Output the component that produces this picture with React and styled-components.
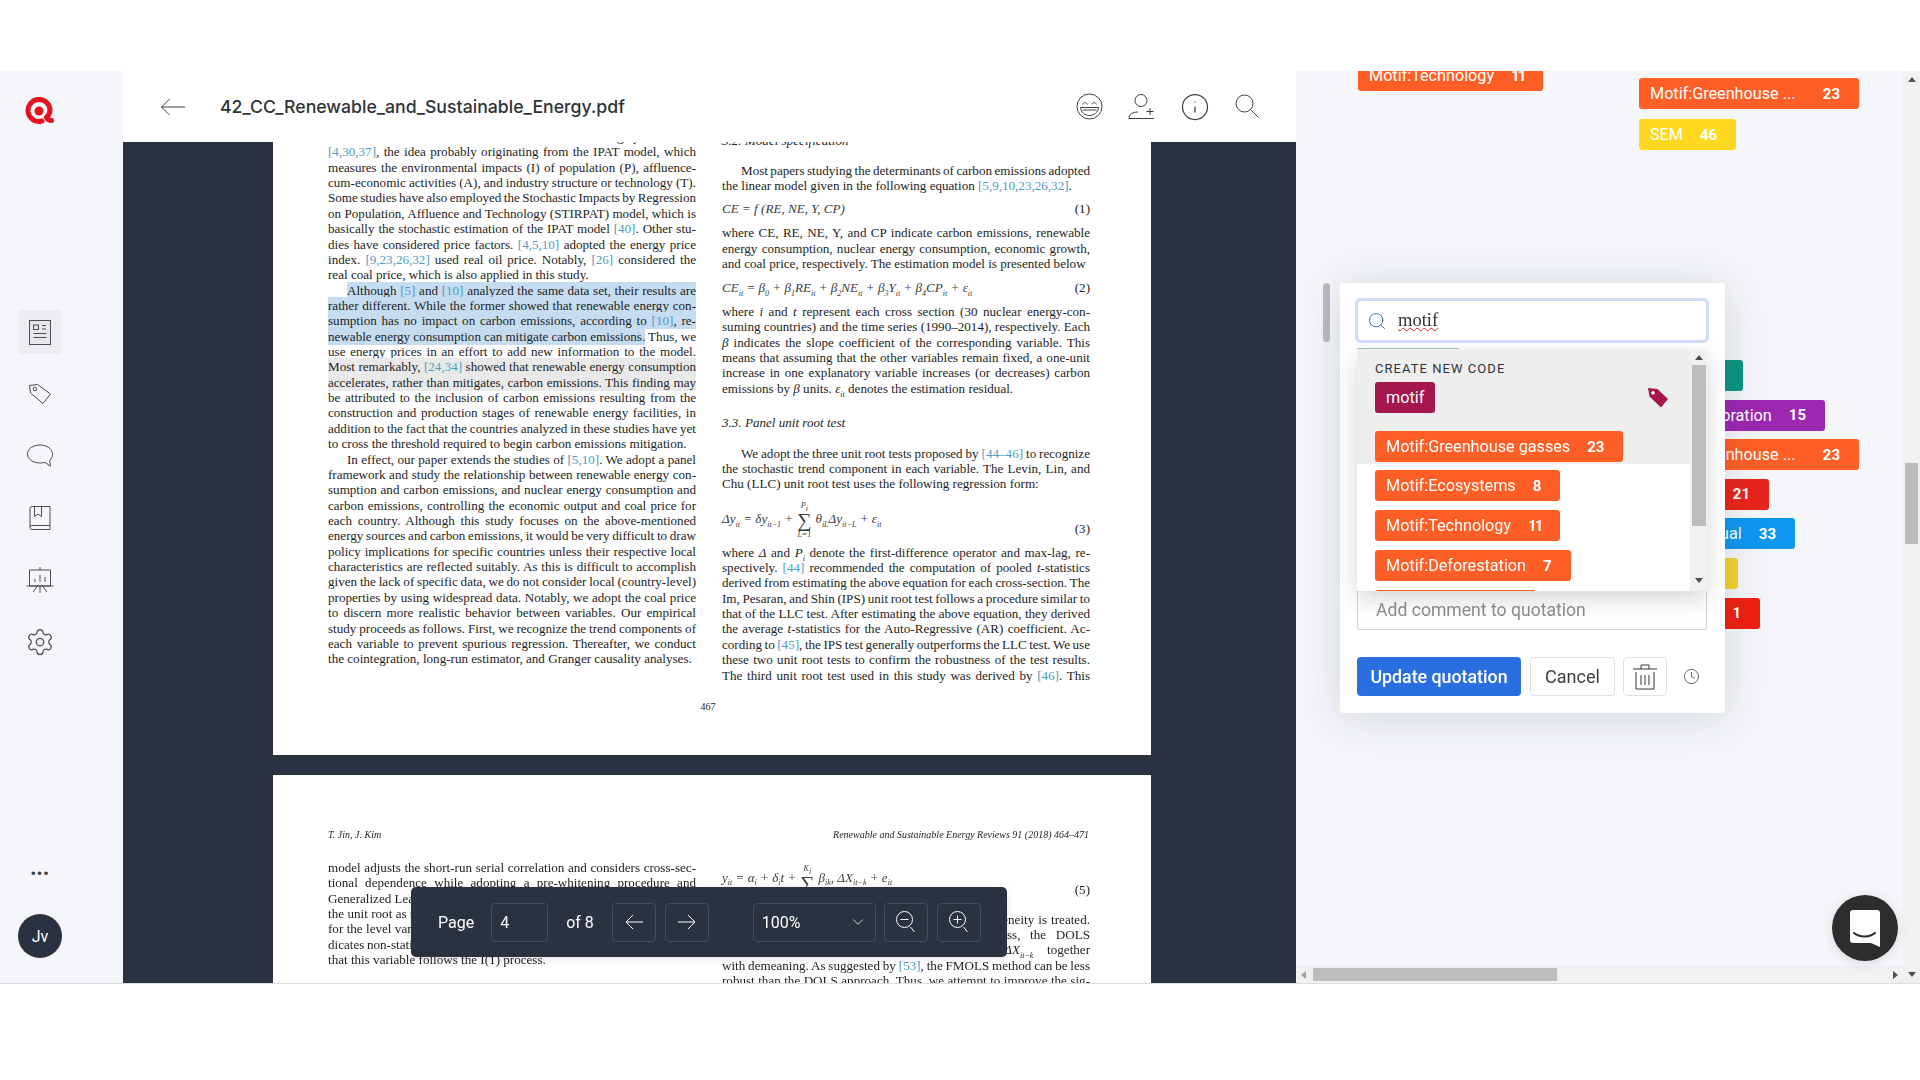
import React from 'react'
import styled, { createGlobalStyle } from 'styled-components'
import { Search, Clock, Info, Settings, ChevronDown } from 'lucide-react'

const GlobalStyle = createGlobalStyle`
    html, body { margin: 0; padding: 0; background: #fff; }
    body { font-family: Roboto, "Liberation Sans", sans-serif; overflow: hidden; }
    * { box-sizing: border-box; }
`

const Screen = styled.div`
    width: 1920px;
    height: 1080px;
    padding-top: 71px;
    background: #fff;
`
const Shell = styled.div`
    display: flex;
    height: 913px;
    border-bottom: 1px solid #dcdcdc;
    overflow: hidden;
`

/* sidebar */
const Sidebar = styled.nav`
    width: 123px;
    flex: none;
    background: #f4f6f9;
    display: flex;
    flex-direction: column;
    align-items: flex-start;
    padding: 26px 0 0 18px;
`
const Logo = styled.svg`
    width: 29px;
    height: 28px;
    margin: 0 0 185px 7px;
`
const NavList = styled.div`
    display: flex;
    flex-direction: column;
    gap: 18px;
`
const NavItem = styled.div`
    width: 44px;
    height: 44px;
    border-radius: 4px;
    display: flex;
    align-items: center;
    justify-content: center;
    color: #4a4d52;
    background: ${p => (p.$active ? '#ebedf1' : 'transparent')};
`
const Dots = styled.div`
    width: 44px;
    margin-top: auto;
    text-align: center;
    color: #3a3d44;
    font-size: 15px;
    font-weight: 700;
    letter-spacing: 1px;
    line-height: 20px;
`
const Avatar = styled.div`
    width: 44px;
    height: 44px;
    border-radius: 50%;
    background: #2a3140;
    color: #fff;
    font-size: 16px;
    font-weight: 400;
    display: flex;
    align-items: center;
    justify-content: center;
    margin: 30px 0 25px;
`

/* document area */
const Main = styled.main`
    width: 1173px;
    flex: none;
    display: flex;
    flex-direction: column;
    min-height: 0;
`
const Header = styled.header`
    height: 71px;
    flex: none;
    display: flex;
    align-items: center;
    padding: 0 36px 0 37px;
    background: #fff;
    color: #3b3e44;
`
const Title = styled.h1`
    margin: 0 0 0 34px;
    font-family: Inter, Roboto, sans-serif;
    font-size: 17.7px;
    font-weight: 500;
    color: #2f3338;
    flex: 1;
`
const HeaderIcons = styled.div`
    display: flex;
    align-items: center;
    gap: 25px;
`
const Viewer = styled.div`
    position: relative;
    flex: 1;
    min-height: 0;
    overflow: hidden;
    background: #2a3140;
    padding-left: 150px;
`
const Page = styled.article`
    width: 878px;
    height: ${p => p.$height}px;
    margin-top: ${p => p.$top}px;
    background: #fff;
    padding: ${p => p.$pad}px 0 0 55px;
    font-family: "Liberation Serif", serif;
    font-size: 13.1px;
    color: #1e1e1e;
    overflow: hidden;
`
const Blurred = styled.div`
    filter: blur(0.35px);
`
const Columns = styled.div`
    display: flex;
    gap: 26px;
`
const Column = styled.div`
    width: 368px;
    flex: none;
    padding-top: ${p => p.$top || 0}px;
`
const Line = styled.div`
    height: 15.36px;
    line-height: 15.36px;
    white-space: nowrap;
    text-align: ${p => (p.$plain ? 'left' : 'justify')};
    text-align-last: ${p => (p.$plain ? 'left' : 'justify')};
    padding-left: ${p => (p.$indent ? 19 : 0)}px;
    margin-top: ${p => p.$gap || 0}px;
    word-spacing: ${p => (p.$plain ? 0 : -1.5)}px;
    sub { font-size: 8px; line-height: 0; }
`
const Heading = styled(Line)`
    font-style: italic;
`
const Cite = styled.span`
    color: #4f9cc0;
`
const Mark = styled.span`
    background: ${p => (p.$grey ? '#e9e9e9' : '#c5dcf1')};
    padding: 1px 0;
`
const Eq = styled.div`
    display: flex;
    justify-content: space-between;
    align-items: center;
    height: ${p => p.$h || 15.36}px;
    margin-top: ${p => p.$gap || 0}px;
    line-height: 15.36px;
`
const EqNumber = styled.span`
    align-self: ${p => (p.$low ? 'flex-end' : 'center')};
    margin-bottom: ${p => p.$lift || 0}px;
`
const Formula = styled.span`
    font-style: italic;
    color: #3c3c3c;
    white-space: pre;
    sub { font-size: 8px; line-height: 0; }
`
const Sum = styled.span`
    display: inline-flex;
    flex-direction: column;
    align-items: center;
    vertical-align: middle;
    font-size: 8px;
    line-height: 9px;
    margin: 0 4px;
    b { font-size: 20px; font-weight: 400; font-style: normal; line-height: 20px; }
`
const PageNumber = styled.div`
    width: 760px;
    text-align: center;
    font-size: 10px;
    margin-top: 18px;
`
const RunningHead = styled.div`
    width: 761px;
    display: flex;
    justify-content: space-between;
    font-style: italic;
    font-size: 10px;
    line-height: 15px;
    margin-bottom: 18px;
`

/* floating page toolbar */
const Toolbar = styled.div`
    position: absolute;
    left: 288px;
    top: 745px;
    width: 596px;
    height: 70px;
    border-radius: 5px;
    background: #2a3140;
    color: #fff;
    display: flex;
    align-items: center;
    padding-left: 27px;
    font-size: 16px;
    box-shadow: 0 2px 8px rgba(0, 0, 0, .12);
`
const Field = styled.div`
    width: ${p => p.$w}px;
    height: 39px;
    margin-left: ${p => p.$ml || 0}px;
    flex: none;
    border: 1px solid #444b5b;
    border-radius: 4px;
    display: flex;
    align-items: center;
    justify-content: ${p => (p.$icon ? 'center' : 'space-between')};
    padding: ${p => (p.$icon ? 0 : '0 8px')};
`
const PageLabel = styled.span`
    margin-left: ${p => p.$ml || 0}px;
`

/* right margin with codes */
const Margin = styled.aside`
    position: relative;
    width: 624px;
    flex: none;
    display: flex;
    flex-direction: column;
    background: #f4f6f9;
    min-height: 0;
`
const MarginBody = styled.div`
    flex: 1;
    min-height: 0;
    display: flex;
`
const Canvas = styled.div`
    flex: 1;
    display: flex;
    overflow: hidden;
    padding-left: 62px;
`
const CodeColumn = styled.div`
    width: ${p => p.$w}px;
    flex: none;
    margin-top: ${p => p.$top}px;
`
const Stack = styled.div`
    display: flex;
    flex-direction: column;
    align-items: flex-start;
    gap: ${p => p.$gap}px;
    margin-top: ${p => p.$top || 0}px;
`
const Tag = styled.div`
    display: inline-flex;
    align-items: center;
    flex: none;
    justify-content: ${p => p.$justify || 'flex-start'};
    width: ${p => (p.$w ? `${p.$w}px` : 'auto')};
    height: 31px;
    padding: 0 ${p => (p.$even ? 11 : 19)}px 0 11px;
    border-radius: 3px;
    background: ${p => p.$color};
    color: #fff;
    font-size: 16.2px;
    white-space: nowrap;
`
const Count = styled.span`
    margin-left: 17px;
    font-size: 15px;
    font-weight: 700;
    letter-spacing: ${p => (p.$tight ? -2 : 0)}px;
`
const VScroll = styled.div`
    width: 17px;
    flex: none;
    background: #f1f1f1;
    display: flex;
    flex-direction: column;
    align-items: center;
    padding-top: 6px;
`
const VThumb = styled.div`
    width: 13px;
    height: 81px;
    margin-top: 381px;
    background: #bdbdbd;
`
const HScroll = styled.div`
    height: 17px;
    flex: none;
    background: #f1f1f1;
    display: flex;
    align-items: center;
    padding-left: 5px;
`
const HThumb = styled.div`
    width: 244px;
    height: 13px;
    flex: none;
    margin-left: 7px;
    background: #bdbdbd;
`
const Arrow = styled.i`
    width: 0;
    height: 0;
    flex: none;
    border: 4px solid transparent;
    ${p => p.$dir === 'up' && 'border-bottom: 5px solid #505050; border-top-width: 0;'}
    ${p => p.$dir === 'down' && 'border-top: 5px solid #505050; border-bottom-width: 0;'}
    ${p => p.$dir === 'left' && 'border-right: 5px solid #a3a3a3; border-left-width: 0;'}
    ${p => p.$dir === 'right' && 'border-left: 5px solid #505050; border-right-width: 0;'}
    margin-left: ${p => p.$ml || 0}px;
    margin-top: ${p => p.$mt || 0}px;
`
const DragHandle = styled.div`
    position: absolute;
    left: 27px;
    top: 212px;
    width: 7px;
    height: 59px;
    border-radius: 4px;
    background: #b9bbbe;
`

/* quotation popover */
const Popover = styled.div`
    position: absolute;
    left: 44px;
    top: 212px;
    width: 385px;
    height: 430px;
    padding: 15px 15px 0;
    background: #fff;
    border-radius: 3px;
    box-shadow: 0 4px 44px rgba(40, 46, 60, .16);
`
const SearchBox = styled.div`
    height: 45px;
    width: 354px;
    display: flex;
    align-items: center;
    gap: 11px;
    padding-left: 9px;
    border: 3px solid #cfdcf6;
    border-radius: 6px;
    background: #fff;
    color: #4a6fc0;
`
const SearchText = styled.span`
    font-family: "Liberation Serif", serif;
    font-size: 18.5px;
    color: #333;
    text-decoration: underline wavy #d0202a 1px;
    text-underline-offset: 1px;
`
const Dropdown = styled.div`
    position: relative;
    z-index: 2;
    display: flex;
    height: 242px;
    width: 350px;
    margin: 6px 0 0 2px;
    background: #fff;
    box-shadow: 0 8px 22px rgba(0, 0, 0, .16);
    &::before {
        content: '';
        position: absolute;
        left: 0;
        top: -1px;
        width: 102px;
        height: 1px;
        background: #8fc9b8;
    }
`
const DropdownBody = styled.div`
    flex: 1;
    min-width: 0;
    overflow: hidden;
`
const CreateArea = styled.div`
    height: 115px;
    padding: 13px 18px 0;
    background: #eeeeee;
`
const CreateLabel = styled.div`
    font-size: 13px;
    line-height: 14px;
    letter-spacing: 1.05px;
    color: #2f3338;
    margin-bottom: 6px;
`
const CreateRow = styled.div`
    display: flex;
    align-items: center;
    justify-content: space-between;
    padding-right: 3px;
    margin-bottom: 18px;
`
const OptionList = styled.div`
    display: flex;
    flex-direction: column;
    align-items: flex-start;
    gap: 9px;
    padding: 6px 18px 0;
    height: 127px;
`
const InnerScroll = styled.div`
    width: 17px;
    flex: none;
    background: #f1f1f1;
    display: flex;
    flex-direction: column;
    align-items: center;
    padding-top: 6px;
`
const InnerThumb = styled.div`
    width: 14px;
    height: 161px;
    margin-top: 5px;
    background: #bdbdbd;
`
const Comment = styled.div`
    height: 39px;
    width: 350px;
    margin-left: 2px;
    display: flex;
    align-items: center;
    padding: 0 18px;
    font-size: 17.6px;
    color: #8b8d92;
    background: #fff;
    border: 1px solid #cfd2d6;
    border-top: 0;
    border-radius: 0 0 3px 3px;
`
const Actions = styled.div`
    display: flex;
    align-items: center;
    margin: 27px 0 0 2px;
    height: 39px;
`
const PrimaryButton = styled.button`
    width: 164px;
    height: 39px;
    border: 0;
    border-radius: 4px;
    background: #2a6fe0;
    color: #fff;
    font: 500 17.8px Roboto, sans-serif;
    padding: 0;
`
const GhostButton = styled.button`
    width: ${p => p.$w}px;
    height: 39px;
    margin-left: ${p => p.$ml}px;
    background: #fff;
    border: 1px solid #dfe1e5;
    border-radius: 4px;
    color: #3a3d42;
    font: 400 18px Roboto, sans-serif;
    padding: 0;
    display: flex;
    align-items: center;
    justify-content: center;
`
const ClockWrap = styled.span`
    display: flex;
    margin-left: 16px;
    color: #45484e;
`
const ChatButton = styled.div`
    position: absolute;
    left: 536px;
    top: 824px;
    width: 66px;
    height: 66px;
    border-radius: 50%;
    background: #2d2d2d;
    display: flex;
    align-items: center;
    justify-content: center;
    box-shadow: 0 2px 12px rgba(0, 0, 0, .12);
`

const stroke = { fill: 'none', stroke: 'currentColor', strokeWidth: 1 }

const DocIcon = () => (
    <svg width="24" height="27" viewBox="0 0 24 27" {...stroke}>
        <rect x="1.5" y="1.5" width="21" height="24" fill="#e6e8ec" />
        <rect x="5.5" y="6" width="5" height="4.5" />
        <path d="M14 6.5h4M14 10h4M5.5 14.5h13M5.5 18.5h13" />
    </svg>
)
const TagIcon = () => (
    <svg width="24" height="24" viewBox="0 0 24 24" {...stroke}>
        <path d="M1.5 3.5 9.5 2.5 22.5 12 15 21.5 2.5 11z" />
        <circle cx="7" cy="7" r="1.8" />
    </svg>
)
const BubbleIcon = () => (
    <svg width="28" height="26" viewBox="0 0 28 26" {...stroke}>
        <path d="M14 2C7 2 1.5 5.800 1.500 11S7 20 14 20c2 0 3.600-.2 5-.6l5.400 3.800-.6-6c2-1.600 2.800-3.600 2.800-5.800C26.500 5.800 21 2 14 2z" />
    </svg>
)
const BookIcon = () => (
    <svg width="24" height="26" viewBox="0 0 24 26" {...stroke}>
        <path d="M2 22V3.500A2 2 0 0 1 4 1.500h18v23H4a2 2 0 0 1-2-2.500 2 2 0 0 1 2-1.500h18" />
        <path d="M6.500 1.500v10l3.500-2.500 3.500 2.500v-10" />
    </svg>
)
const BoardIcon = () => (
    <svg width="28" height="28" viewBox="0 0 28 28" {...stroke}>
        <path d="M14 1v3M3.500 4h21v16h-21zM.5 20h27M14 20v7M11.500 20 7 26M16.500 20l4.500 6M9 16v-3M14 16V9M19 16v-5" />
    </svg>
)
const BackArrow = () => (
    <svg width="26" height="18" viewBox="0 0 26 18" {...stroke}>
        <path d="M25 9H1.500M9.500 1 1.500 9l8 8" />
    </svg>
)
const SmileIcon = () => (
    <svg width="27" height="27" viewBox="0 0 27 27" {...stroke}>
        <circle cx="13.500" cy="13.500" r="12.500" />
        <path d="M6.500 11.500c.8-2.500 4-2.500 4.800 0M15.700 11.500c.8-2.500 4-2.500 4.800 0M4.500 14.500h18c-.5 5-4.500 8-9 8s-8.500-3-9-8zM6.500 17h14" />
    </svg>
)
const UserPlusIcon = () => (
    <svg width="27" height="27" viewBox="0 0 27 27" {...stroke}>
        <circle cx="13" cy="7.500" r="6" />
        <path d="M1 25.500h25M1 25.500c0-4.500 4-6.500 9-6.500M18.500 18.500h7M22 15v7" />
    </svg>
)
const LensIcon = () => (
    <svg width="25" height="25" viewBox="0 0 25 25" {...stroke}>
        <circle cx="9.500" cy="9.500" r="8.500" />
        <path d="m15.500 15.500 8 8" />
    </svg>
)
const ZoomIcon = ({ plus }) => (
    <svg width="22" height="24" viewBox="0 0 22 24" fill="none" stroke="#fff" strokeWidth="1">
        <circle cx="9.500" cy="9.500" r="8" />
        <path d="M5.500 9.500h8M15.500 17l4 5" />
        {plus && <path d="M9.500 5.500v8" />}
    </svg>
)
const LineArrow = ({ flip }) => (
    <svg width="20" height="18" viewBox="0 0 20 18" fill="none" stroke="#fff" strokeWidth="1">
        <path d={flip ? 'M1 9h17M11 2l7 7-7 7' : 'M19 9H2M9 2 2 9l7 7'} />
    </svg>
)
const TrashIcon = () => (
    <svg width="26" height="28" viewBox="0 0 26 28" fill="none" stroke="#33363b" strokeWidth="1">
        <path d="M1 6h24M9 6V2h8v4M4 9v17h18V9M9 12v10M13 12v10M17 12v10" />
    </svg>
)
const SolidTag = () => (
    <svg width="22" height="21" viewBox="0 0 22 21">
        <path fillRule="evenodd" fill="#a3174d" d="M1 1l9.500 1L21 12l-7 8.500L2.500 9.500zM6 4a1.800 1.800 0 1 0 .01 0z" />
    </svg>
)
const ChatGlyph = () => (
    <svg width="30" height="37" viewBox="0 0 30 37">
        <path fill="#fff" d="M3 0h24a3 3 0 0 1 3 3v34l-9-4H3a3 3 0 0 1-3-3V3a3 3 0 0 1 3-3z" />
        <path fill="none" stroke="#2d2d2d" strokeWidth="2" strokeLinecap="round" d="M4 23c5 4.500 16 4.500 21 0" />
    </svg>
)

const ORANGE = '#ff5f26'

const App = () => (
    <Screen>
        <GlobalStyle />
        <Shell>
            <Sidebar>
                <Logo viewBox="0 0 29 28">
                    <path fill="none" stroke="#e3141f" strokeWidth="5" strokeLinecap="round" d="M17 24a11 11 0 1 1 8-10.500c0 3-1.500 5-3.500 7 1 1.800 2.500 3 5 3" />
                    <circle cx="14" cy="14" r="4.500" fill="#e3141f" />
                </Logo>
                <NavList>
                    <NavItem $active><DocIcon /></NavItem>
                    <NavItem><TagIcon /></NavItem>
                    <NavItem><BubbleIcon /></NavItem>
                    <NavItem><BookIcon /></NavItem>
                    <NavItem><BoardIcon /></NavItem>
                    <NavItem><Settings size={30} strokeWidth={1} /></NavItem>
                </NavList>
                <Dots>•••</Dots>
                <Avatar>Jv</Avatar>
            </Sidebar>

            <Main>
                <Header>
                    <BackArrow />
                    <Title>42_CC_Renewable_and_Sustainable_Energy.pdf</Title>
                    <HeaderIcons>
                        <SmileIcon />
                        <UserPlusIcon />
                        <Info size={30} strokeWidth={1} />
                        <LensIcon />
                    </HeaderIcons>
                </Header>
                <Viewer>
                    <Blurred>
                        <Page $top={-20} $height={633} $pad={7}>
                            <Columns>
                                <Column>
                                    <Line>the level of carbon emissions. Such studies are largely based on</Line>
                                    <Line><Cite>[4,30,37]</Cite>, the idea probably originating from the IPAT model, which</Line>
                                    <Line>measures the environmental impacts (I) of population (P), affluence-</Line>
                                    <Line>cum-economic activities (A), and industry structure or technology (T).</Line>
                                    <Line>Some studies have also employed the Stochastic Impacts by Regression</Line>
                                    <Line>on Population, Affluence and Technology (STIRPAT) model, which is</Line>
                                    <Line>basically the stochastic estimation of the IPAT model <Cite>[40]</Cite>. Other stu-</Line>
                                    <Line>dies have considered price factors. <Cite>[4,5,10]</Cite> adopted the energy price</Line>
                                    <Line>index. <Cite>[9,23,26,32]</Cite> used real oil price. Notably, <Cite>[26]</Cite> considered the</Line>
                                    <Line $plain>real coal price, which is also applied in this study.</Line>
                                    <Line $indent><Mark>Although <Cite>[5]</Cite> and <Cite>[10]</Cite> analyzed the same data set, their results are</Mark></Line>
                                    <Line><Mark>rather different. While the former showed that renewable energy con-</Mark></Line>
                                    <Line><Mark>sumption has no impact on carbon emissions, according to <Cite>[10]</Cite>, re-</Mark></Line>
                                    <Line><Mark>newable energy consumption can mitigate carbon emissions.</Mark> Thus, we</Line>
                                    <Line>use energy prices in an effort to add new information to the model.</Line>
                                    <Line><Mark $grey>Most remarkably, <Cite>[24,34]</Cite> showed that renewable energy consumption</Mark></Line>
                                    <Line><Mark $grey>accelerates, rather than mitigates, carbon emissions. This finding may</Mark></Line>
                                    <Line>be attributed to the inclusion of carbon emissions resulting from the</Line>
                                    <Line>construction and production stages of renewable energy facilities, in</Line>
                                    <Line>addition to the fact that the countries analyzed in these studies have yet</Line>
                                    <Line $plain>to cross the threshold required to begin carbon emissions mitigation.</Line>
                                    <Line $indent>In effect, our paper extends the studies of <Cite>[5,10]</Cite>. We adopt a panel</Line>
                                    <Line>framework and study the relationship between renewable energy con-</Line>
                                    <Line>sumption and carbon emissions, and nuclear energy consumption and</Line>
                                    <Line>carbon emissions, controlling the economic output and coal price for</Line>
                                    <Line>each country. Although this study focuses on the above-mentioned</Line>
                                    <Line>energy sources and carbon emissions, it would be very difficult to draw</Line>
                                    <Line>policy implications for specific countries unless their respective local</Line>
                                    <Line>characteristics are reflected suitably. As this is difficult to accomplish</Line>
                                    <Line>given the lack of specific data, we do not consider local (country-level)</Line>
                                    <Line>properties by using widespread data. Notably, we adopt the coal price</Line>
                                    <Line>to discern more realistic behavior between variables. Our empirical</Line>
                                    <Line>study proceeds as follows. First, we recognize the trend components of</Line>
                                    <Line>each variable to prevent spurious regression. Thereafter, we conduct</Line>
                                    <Line $plain>the cointegration, long-run estimator, and Granger causality analyses.</Line>
                                </Column>
                                <Column $top={4}>
                                    <Heading $plain>3.2. Model specification</Heading>
                                    <Line $indent $gap={14.6}>Most papers studying the determinants of carbon emissions adopted</Line>
                                    <Line $plain>the linear model given in the following equation <Cite>[5,9,10,23,26,32]</Cite>.</Line>
                                    <Eq $gap={7.6}>
                                        <Formula>CE = f (RE, NE, Y, CP)</Formula>
                                        <EqNumber>(1)</EqNumber>
                                    </Eq>
                                    <Line $gap={8.6}>where CE, RE, NE, Y, and CP indicate carbon emissions, renewable</Line>
                                    <Line>energy consumption, nuclear energy consumption, economic growth,</Line>
                                    <Line $plain>and coal price, respectively. The estimation model is presented below</Line>
                                    <Eq $gap={8.6}>
                                        <Formula>CE<sub>it</sub> = β<sub>0</sub> + β<sub>1</sub>RE<sub>it</sub> + β<sub>2</sub>NE<sub>it</sub> + β<sub>3</sub>Y<sub>it</sub> + β<sub>4</sub>CP<sub>it</sub> + ε<sub>it</sub></Formula>
                                        <EqNumber>(2)</EqNumber>
                                    </Eq>
                                    <Line $gap={8.6}>where <i>i</i> and <i>t</i> represent each cross section (30 nuclear energy-con-</Line>
                                    <Line>suming countries) and the time series (1990–2014), respectively. Each</Line>
                                    <Line><i>β</i> indicates the slope coefficient of the corresponding variable. This</Line>
                                    <Line>means that assuming that the other variables remain fixed, a one-unit</Line>
                                    <Line>increase in one explanatory variable increases (or decreases) carbon</Line>
                                    <Line $plain>emissions by <i>β</i> units. <i>ε<sub>it</sub></i> denotes the estimation residual.</Line>
                                    <Heading $plain $gap={18.6}>3.3. Panel unit root test</Heading>
                                    <Line $indent $gap={15.6}>We adopt the three unit root tests proposed by <Cite>[44–46]</Cite> to recognize</Line>
                                    <Line>the stochastic trend component in each variable. The Levin, Lin, and</Line>
                                    <Line $plain>Chu (LLC) unit root test uses the following regression form:</Line>
                                    <Eq $gap={5} $h={46}>
                                        <Formula>
                                            Δy<sub>it</sub> = δy<sub>it−1</sub> +
                                            <Sum><span>P<sub>i</sub></span><b>∑</b><span>L=1</span></Sum>
                                            θ<sub>iL</sub>Δy<sub>it−L</sub> + ε<sub>it</sub>
                                        </Formula>
                                        <EqNumber $low $lift={6}>(3)</EqNumber>
                                    </Eq>
                                    <Line $gap={2}>where <i>Δ</i> and <i>P<sub>i</sub></i> denote the first-difference operator and max-lag, re-</Line>
                                    <Line>spectively. <Cite>[44]</Cite> recommended the computation of pooled <i>t</i>-statistics</Line>
                                    <Line>derived from estimating the above equation for each cross-section. The</Line>
                                    <Line>Im, Pesaran, and Shin (IPS) unit root test follows a procedure similar to</Line>
                                    <Line>that of the LLC test. After estimating the above equation, they derived</Line>
                                    <Line>the average <i>t</i>-statistics for the Auto-Regressive (AR) coefficient. Ac-</Line>
                                    <Line>cording to <Cite>[45]</Cite>, the IPS test generally outperforms the LLC test. We use</Line>
                                    <Line>these two unit root tests to confirm the robustness of the test results.</Line>
                                    <Line>The third unit root test used in this study was derived by <Cite>[46]</Cite>. This</Line>
                                </Column>
                            </Columns>
                            <PageNumber>467</PageNumber>
                        </Page>
                        <Page $top={20} $height={300} $pad={52}>
                            <RunningHead>
                                <span>T. Jin, J. Kim</span>
                                <span>Renewable and Sustainable Energy Reviews 91 (2018) 464–471</span>
                            </RunningHead>
                            <Columns>
                                <Column>
                                    <Line>model adjusts the short-run serial correlation and considers cross-sec-</Line>
                                    <Line>tional dependence while adopting a pre-whitening procedure and</Line>
                                    <Line>Generalized Least Squares detrending of the series. The ADF test tests</Line>
                                    <Line>the unit root as the null hypothesis, and allows for a break in the trend</Line>
                                    <Line>for the level variables. A rejection of the null hypothesis of the test in-</Line>
                                    <Line>dicates non-stationarity in the data series, and the first difference shows</Line>
                                    <Line $plain>that this variable follows the I(1) process.</Line>
                                </Column>
                                <Column>
                                    <Eq $h={36}>
                                        <Formula>
                                            y<sub>it</sub> = α<sub>i</sub> + δ<sub>i</sub>t +
                                            <Sum><span>K<sub>i</sub></span><b>∑</b></Sum>
                                            β<sub>ik</sub>, ΔX<sub>it−k</sub> + e<sub>it</sub>
                                        </Formula>
                                        <EqNumber $low $lift={-1}>(5)</EqNumber>
                                    </Eq>
                                    <Line $gap={15.5}>dogeneity and heterogeneity in the model and endogeneity is treated.</Line>
                                    <Line>Because the model has an autoregressive process, the DOLS</Line>
                                    <Line>estimator includes lags and leads of the <i>ΔX<sub>it−k</sub></i> together</Line>
                                    <Line>with demeaning. As suggested by <Cite>[53]</Cite>, the FMOLS method can be less</Line>
                                    <Line>robust than the DOLS approach. Thus, we attempt to improve the sig-</Line>
                                </Column>
                            </Columns>
                        </Page>
                    </Blurred>
                    <Toolbar>
                        <PageLabel>Page</PageLabel>
                        <Field $w={57} $ml={17}>4</Field>
                        <PageLabel $ml={18}>of 8</PageLabel>
                        <Field $w={44} $ml={18} $icon><LineArrow /></Field>
                        <Field $w={44} $ml={9} $icon><LineArrow flip /></Field>
                        <Field $w={123} $ml={44}>100%<ChevronDown size={18} strokeWidth={1} /></Field>
                        <Field $w={44} $ml={8} $icon><ZoomIcon /></Field>
                        <Field $w={44} $ml={9} $icon><ZoomIcon plus /></Field>
                    </Toolbar>
                </Viewer>
            </Main>

            <Margin>
                <MarginBody>
                    <Canvas>
                        <CodeColumn $w={281} $top={-11}>
                            <Tag $color={ORANGE}>Motif:Technology<Count $tight>11</Count></Tag>
                        </CodeColumn>
                        <CodeColumn $w={260} $top={7}>
                            <Stack $gap={10}>
                                <Tag $color={ORANGE} $w={220} $justify="space-between">Motif:Greenhouse ...<Count>23</Count></Tag>
                                <Tag $color="#ffd91f">SEM<Count>46</Count></Tag>
                            </Stack>
                            <Stack $gap={8.6} $top={210}>
                                <Tag $color="#0b9482" $w={104} />
                                <Tag $color="#9c27b0" $w={186} $justify="flex-end">Motif:Exploration<Count>15</Count></Tag>
                                <Tag $color={ORANGE} $w={220} $justify="space-between">Motif:Greenhouse ...<Count>23</Count></Tag>
                                <Tag $color="#e8251a" $w={130} $justify="flex-end">Theory<Count>21</Count></Tag>
                                <Tag $color="#0f97f0" $w={156} $justify="flex-end">Conceptual<Count>33</Count></Tag>
                                <Tag $color="#f2d32c" $w={99} />
                                <Tag $color="#ee2112" $w={121} $justify="flex-end">Data<Count>1</Count></Tag>
                            </Stack>
                        </CodeColumn>
                    </Canvas>
                    <VScroll>
                        <Arrow $dir="up" />
                        <VThumb />
                    </VScroll>
                </MarginBody>
                <HScroll>
                    <Arrow $dir="left" />
                    <HThumb />
                    <Arrow $dir="right" $ml={336} />
                    <Arrow $dir="down" $ml={10} />
                </HScroll>
                <DragHandle />
                <Popover>
                    <SearchBox>
                        <Search size={20} strokeWidth={1.2} />
                        <SearchText>motif</SearchText>
                    </SearchBox>
                    <Dropdown>
                        <DropdownBody>
                            <CreateArea>
                                <CreateLabel>CREATE NEW CODE</CreateLabel>
                                <CreateRow>
                                    <Tag $color="#a3174d" $even>motif</Tag>
                                    <SolidTag />
                                </CreateRow>
                                <Tag $color={ORANGE}>Motif:Greenhouse gasses<Count>23</Count></Tag>
                            </CreateArea>
                            <OptionList>
                                <Tag $color={ORANGE}>Motif:Ecosystems<Count>8</Count></Tag>
                                <Tag $color={ORANGE}>Motif:Technology<Count $tight>11</Count></Tag>
                                <Tag $color={ORANGE}>Motif:Deforestation<Count>7</Count></Tag>
                                <Tag $color={ORANGE}>Motif:Pollution<Count>5</Count></Tag>
                            </OptionList>
                        </DropdownBody>
                        <InnerScroll>
                            <Arrow $dir="up" />
                            <InnerThumb />
                            <Arrow $dir="down" $mt={52} />
                        </InnerScroll>
                    </Dropdown>
                    <Comment>Add comment to quotation</Comment>
                    <Actions>
                        <PrimaryButton>Update quotation</PrimaryButton>
                        <GhostButton $w={85} $ml={9}>Cancel</GhostButton>
                        <GhostButton $w={44} $ml={8}><TrashIcon /></GhostButton>
                        <ClockWrap><Clock size={17} strokeWidth={1.2} /></ClockWrap>
                    </Actions>
                </Popover>
                <ChatButton><ChatGlyph /></ChatButton>
            </Margin>
        </Shell>
    </Screen>
)

export default App
